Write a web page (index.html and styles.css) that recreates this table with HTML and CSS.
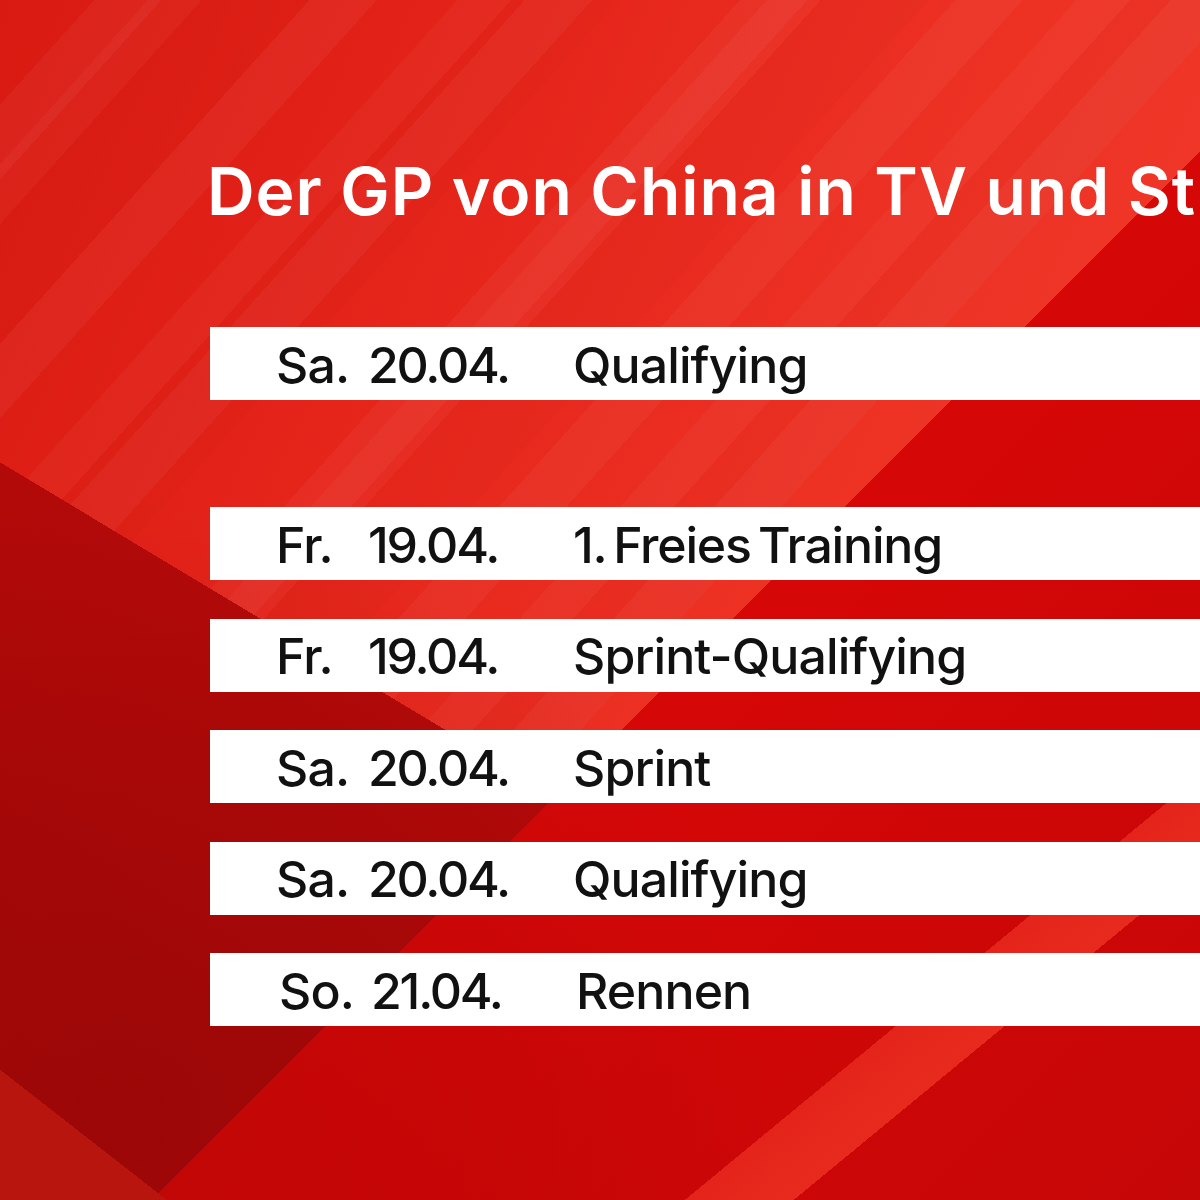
FILE: index.html
```html
<!DOCTYPE html>
<html lang="de">
<head>
<meta charset="utf-8">
<title>Der GP von China in TV und Stream</title>
<link rel="stylesheet" href="styles.css">
</head>
<body>
<main class="poster">
  <h1 class="title">Der GP von China in TV und Stream</h1>
  <section class="schedule">
    <div class="row row--featured">
      <span class="day">Sa.</span><span class="date">20.04.</span><span class="event">Qualifying</span>
    </div>
    <div class="list">
      <div class="row">
        <span class="day">Fr.</span><span class="date">19.04.</span><span class="event event--tight">1. Freies Training</span>
      </div>
      <div class="row">
        <span class="day">Fr.</span><span class="date">19.04.</span><span class="event">Sprint-Qualifying</span>
      </div>
      <div class="row">
        <span class="day">Sa.</span><span class="date">20.04.</span><span class="event">Sprint</span>
      </div>
      <div class="row">
        <span class="day">Sa.</span><span class="date">20.04.</span><span class="event">Qualifying</span>
      </div>
      <div class="row row--shift">
        <span class="day">So.</span><span class="date">21.04.</span><span class="event">Rennen</span>
      </div>
    </div>
  </section>
</main>
</body>
</html>
```
FILE: styles.css
```css
* { box-sizing: border-box; }

html, body {
  margin: 0;
  padding: 0;
}

body {
  font-family: Inter, "Liberation Sans", sans-serif;
}

.poster {
  width: 1200px;
  height: 1200px;
  overflow: hidden;
  padding-top: 158px;
  background:
    /* lighter lower-left corner */
    linear-gradient(218deg, transparent 93.9%, #b9150f 93.9%),
    /* bright diagonal band, lower right */
    linear-gradient(140.5deg, transparent 80.6%, #e4241a 80.6%, #e82a1e 84.7%, transparent 84.7%),
    /* shading towards the lower-left */
    radial-gradient(ellipse 650px 620px at 120px 1120px, rgba(110, 0, 0, 0.2), rgba(110, 0, 0, 0.1) 60%, rgba(110, 0, 0, 0) 100%),
    /* dark right region */
    linear-gradient(135deg, transparent 56.3%, #d60707 56.3%, #cf0606 75%, #c60707 100%),
    /* dark lower-left region */
    linear-gradient(211deg, transparent 61.6%, #b30909 61.6%, #aa0808 85%, #a80808 100%),
    /* subtle diagonal stripes */
    repeating-linear-gradient(132deg, rgba(255,255,255,0) 0 70px, rgba(255,255,255,0.04) 70px 120px, rgba(255,255,255,0) 120px 160px),
    repeating-linear-gradient(132deg, rgba(255,255,255,0) 0 110px, rgba(255,255,255,0.03) 110px 150px, rgba(150,0,0,0.035) 150px 230px),
    /* base */
    linear-gradient(115deg, #d81a12 0%, #e5241a 30%, #ed3224 60%, #f03a2b 85%, #ee3426 100%);
}

.title {
  margin: 0 0 0 207px;
  font-size: 66px;
  line-height: 1;
  font-weight: 600;
  color: #ffffff;
  white-space: nowrap;
  letter-spacing: 0.95px;
}

.schedule {
  margin-top: 103px;
  margin-left: 210px;
  display: flex;
  flex-direction: column;
  gap: 107px;
}

.list {
  display: flex;
  flex-direction: column;
  gap: 38.5px;
}

.row {
  height: 73px;
  background: #ffffff;
  display: grid;
  grid-template-columns: 92px 205px 1fr;
  align-items: center;
  padding: 2px 0 0 66px;
  font-size: 50px;
  font-weight: 500;
  line-height: 1;
  color: #111111;
  white-space: nowrap;
  letter-spacing: -0.9px;
}

.date {
  letter-spacing: -2.2px;
}

.event--tight {
  letter-spacing: -1.2px;
  word-spacing: -5px;
}

.row--shift {
  padding-left: 69px;
}
```
